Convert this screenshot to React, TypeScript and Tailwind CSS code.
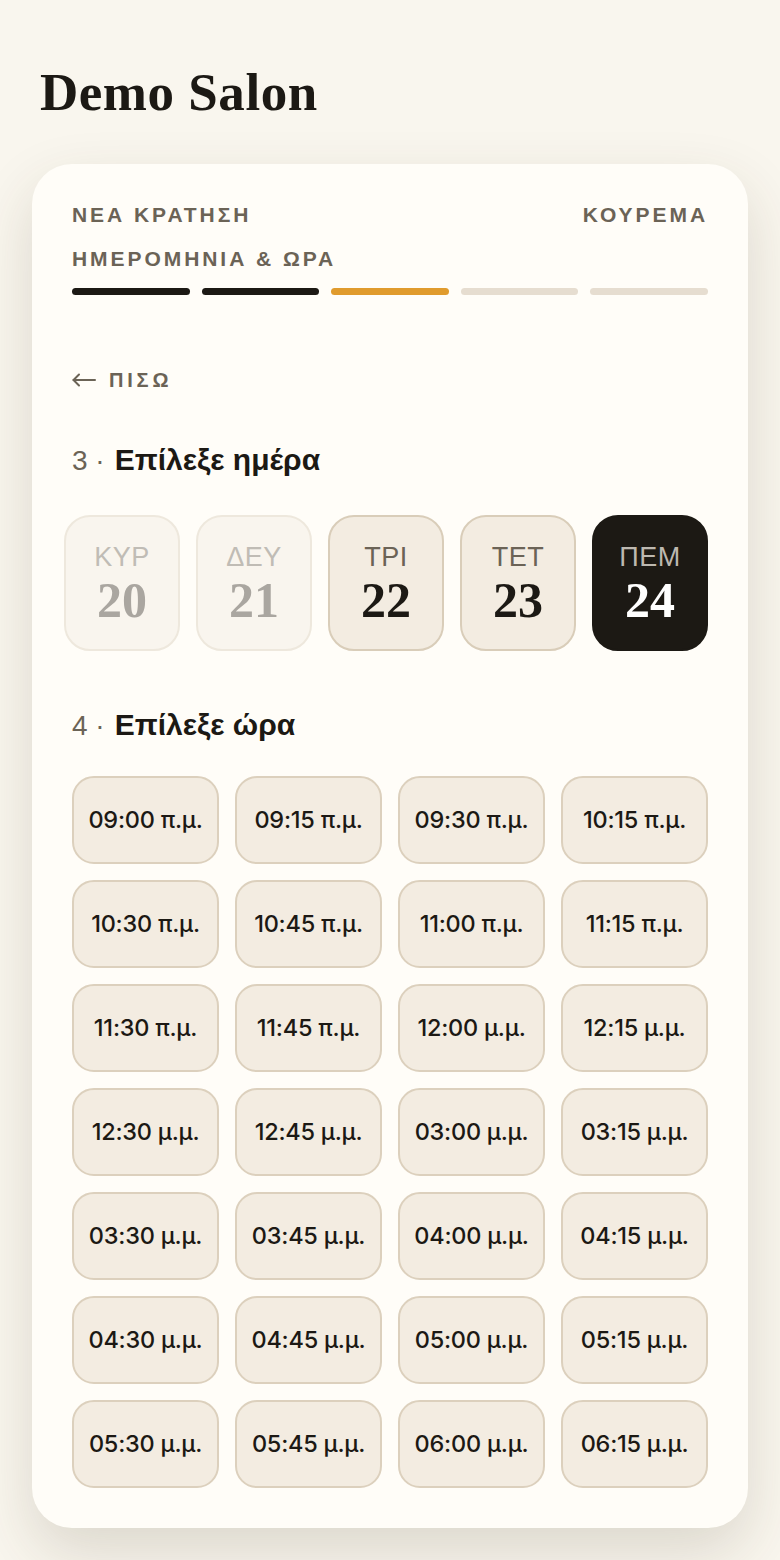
import React, { useState } from 'react';

const sans = { fontFamily: '"Liberation Sans", Arial, sans-serif' };
const serif = { fontFamily: '"Liberation Serif", "Times New Roman", serif' };
const slotFont = { fontFamily: 'Inter, "Liberation Sans", Arial, sans-serif' };

// days shown in the strip; first two are in the past
const DAYS = [
  { label: 'ΚΥΡ', num: 20, disabled: true },
  { label: 'ΔΕΥ', num: 21, disabled: true },
  { label: 'ΤΡΙ', num: 22, disabled: false },
  { label: 'ΤΕΤ', num: 23, disabled: false },
  { label: 'ΠΕΜ', num: 24, disabled: false },
];

const SLOTS = [
  '09:00 π.μ.', '09:15 π.μ.', '09:30 π.μ.', '10:15 π.μ.',
  '10:30 π.μ.', '10:45 π.μ.', '11:00 π.μ.', '11:15 π.μ.',
  '11:30 π.μ.', '11:45 π.μ.', '12:00 μ.μ.', '12:15 μ.μ.',
  '12:30 μ.μ.', '12:45 μ.μ.', '03:00 μ.μ.', '03:15 μ.μ.',
  '03:30 μ.μ.', '03:45 μ.μ.', '04:00 μ.μ.', '04:15 μ.μ.',
  '04:30 μ.μ.', '04:45 μ.μ.', '05:00 μ.μ.', '05:15 μ.μ.',
  '05:30 μ.μ.', '05:45 μ.μ.', '06:00 μ.μ.', '06:15 μ.μ.',
];

const STEPS = ['done', 'done', 'current', 'todo', 'todo'];

export default function App() {
  const [day, setDay] = useState(24);
  const [slot, setSlot] = useState<string | null>(null);

  return (
    <div className="min-h-[1560px] bg-[#f9f6ee] pb-10" style={sans}>
      {/* Salon name */}
      <div className="px-10 pt-[64px] pb-[44px]">
        <h1 className="text-[53px] leading-[56px] font-bold text-[#1c1914] tracking-[0.01em]" style={serif}>
          Demo Salon
        </h1>
      </div>

      {/* Booking card */}
      <div className="mx-8 rounded-[40px] bg-[#fffdf8] px-10 pt-[37px] pb-10 shadow-[0_24px_60px_rgba(70,55,30,0.16)]">
        <div className="flex justify-between">
          <div>
            <p className="text-[21px] leading-[28px] font-bold tracking-[0.14em] text-[#6b6356]">ΝΕΑ ΚΡΑΤΗΣΗ</p>
            <p className="mt-[16px] text-[21px] leading-[28px] font-bold tracking-[0.14em] text-[#6b6356]">ΗΜΕΡΟΜΗΝΙΑ &amp; ΩΡΑ</p>
          </div>
          <p className="text-[21px] leading-[28px] font-bold tracking-[0.14em] text-[#6b6356]">ΚΟΥΡΕΜΑ</p>
        </div>

        {/* Progress */}
        <div className="mt-[15px] flex gap-3">
          {STEPS.map((s, i) => (
            <div
              key={i}
              className={
                'h-[7px] flex-1 rounded-full ' +
                (s === 'done' ? 'bg-[#1c1914]' : s === 'current' ? 'bg-[#e09b2d]' : 'bg-[#e6ddd0]')
              }
            />
          ))}
        </div>

        {/* Back */}
        <button className="mt-[73px] flex items-center gap-[13px] text-[20px] leading-[24px] font-bold tracking-[0.19em] text-[#6b6356]">
          <svg width="24" height="14" viewBox="0 0 24 14" fill="none" stroke="currentColor" strokeWidth="2" strokeLinecap="round" strokeLinejoin="round">
            <path d="M23 7H1.5" />
            <path d="M7 1.5L1.5 7L7 12.5" />
          </svg>
          ΠΙΣΩ
        </button>

        {/* Step 3 */}
        <h2 className="mt-[50px] flex items-baseline gap-[10px] text-[30px] leading-[36px]">
          <span className="text-[#6b6356] text-[28px]">3 ·</span>
          <span className="font-bold text-[#1c1914]">Επίλεξε ημέρα</span>
        </h2>

        <div className="-ml-2 mt-[36px] flex gap-4">
          {DAYS.map(d => {
            const selected = d.num === day;
            const base = 'flex h-[136px] w-[116px] flex-col items-center justify-center rounded-[26px] border-2 ';
            const tone = d.disabled
              ? 'border-[#eee8dd] bg-[#f9f5ee]'
              : selected
                ? 'border-[#1c1914] bg-[#1c1914]'
                : 'border-[#d9cdb9] bg-[#f3ece1]';
            return (
              <button key={d.num} className={base + tone} onClick={() => !d.disabled && setDay(d.num)}>
                <span
                  className={
                    'text-[27px] leading-[30px] tracking-[0.02em] ' +
                    (d.disabled ? 'text-[#c0bcb5]' : selected ? 'text-[#bdb8b0]' : 'text-[#6b6356]')
                  }
                >
                  {d.label}
                </span>
                <span
                  className={
                    'mt-[4px] text-[50px] leading-[48px] font-bold ' +
                    (d.disabled ? 'text-[#aaa6a0]' : selected ? 'text-white' : 'text-[#1c1914]')
                  }
                  style={serif}
                >
                  {d.num}
                </span>
              </button>
            );
          })}
        </div>

        {/* Step 4 */}
        <h2 className="mt-[56px] flex items-baseline gap-[10px] text-[30px] leading-[36px]">
          <span className="text-[#6b6356] text-[28px]">4 ·</span>
          <span className="font-bold text-[#1c1914]">Επίλεξε ώρα</span>
        </h2>

        <div className="mt-[32px] grid grid-cols-4 gap-4">
          {SLOTS.map(t => (
            <button
              key={t}
              onClick={() => setSlot(t)}
              style={slotFont}
              className={
                'flex h-[88px] items-center justify-center rounded-[22px] border-2 text-[23.5px] font-medium tracking-[-0.01em] ' +
                (slot === t
                  ? 'border-[#1c1914] bg-[#1c1914] text-white'
                  : 'border-[#dcd0bd] bg-[#f3ece1] text-[#1c1914]')
              }
            >
              {t}
            </button>
          ))}
        </div>
      </div>
    </div>
  );
}
